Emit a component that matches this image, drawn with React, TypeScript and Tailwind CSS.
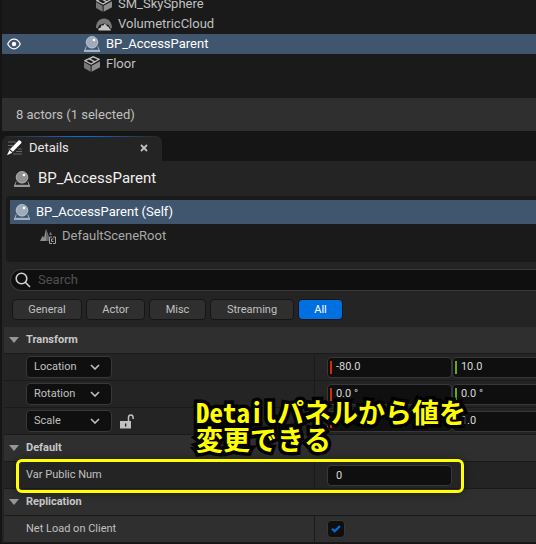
import { useState, type ReactNode } from "react";

function SphereIcon({ tone = "#c0c0c0" }: { tone?: string }) {
  return (
    <svg width="16" height="16" viewBox="0 0 16 16" className="shrink-0" aria-hidden="true">
      <path d="M2.200 10.500 1 14M13.800 10.500 15 14" stroke={tone} strokeWidth="1" opacity=".7" />
      <rect x="0" y="13.800" width="16" height="2.200" fill={tone} opacity=".75" />
      <circle cx="8" cy="6.300" r="5.800" fill={tone} fillOpacity=".7" stroke={tone} strokeWidth=".8" />
      <circle cx="10" cy="4" r="1.300" fill="#fff" />
    </svg>
  );
}

function MeshIcon() {
  return (
    <svg width="16" height="16" viewBox="0 0 16 16" className="shrink-0" aria-hidden="true">
      <path d="M0 6 6.600 9.800v6L0 12z" fill="#777" />
      <path d="M7.600 9.800 16 5.200v6l-8.400 4.600z" fill="#8c8c8c" />
      <path d="M1 4.700 9.200.8l6 2.500-8.100 4.800z" fill="#1a1a1a" stroke="#c0c0c0" strokeWidth="1.300" />
      <path d="m5.200 2.800 5.800 3" stroke="#c0c0c0" strokeWidth="1.300" />
    </svg>
  );
}

function CloudIcon() {
  return (
    <svg width="16" height="16" viewBox="0 0 16 16" className="shrink-0" aria-hidden="true">
      <path d="M0 12C0 6.500 3.200 2.500 8 2.500s8 4 8 9.500l-1.500.5L12.500 9 8 7.500 3.500 9l-2 3.500z" fill="#777" />
      <path d="M2.500 14.500v-2.200l2-.5 1-2.500 1.800.3 1-1.600 1.900.4.700 1.800 1.700.6.600 1.700 1.500.6v1.400z" fill="#c4c4c4" />
    </svg>
  );
}

function EyeIcon() {
  return (
    <svg width="14" height="12" viewBox="0 0 14 12" aria-hidden="true">
      <path d="M.7 6C2.300 2.800 4.400 1.200 7 1.200S11.700 2.800 13.300 6C11.700 9.200 9.600 10.800 7 10.800S2.300 9.200.7 6z" fill="none" stroke="#fff" strokeWidth="1.200" />
      <circle cx="7" cy="6" r="2.200" fill="#fff" />
    </svg>
  );
}

function DetailsIcon() {
  return (
    <svg width="16" height="16" viewBox="0 0 16 16" className="shrink-0" aria-hidden="true">
      <path d="M1 2h8M1 5.500h5M1 9h3M11 9h4M9 11.500h6M6 14h9" stroke="#686868" strokeWidth="1" />
      <path d="m3 9.200 8.500-8.700c1-.8 3.600 1.600 2.900 2.600l-8.500 8.700z" fill="#fff" />
      <path d="m2.400 10 2.900 2.700L0 15.200z" fill="#fff" />
    </svg>
  );
}

function SceneRootIcon() {
  return (
    <svg width="16" height="16" viewBox="0 0 16 16" className="shrink-0" aria-hidden="true">
      <path d="M0 13 2.500 8 4 9.500 6 1l2.500 7v5z" fill="#8d8d8d" />
      <path d="m6 1 2.500 7V13H6z" fill="#666" />
      <path d="m9.500 6 1-2.500L12 7H9.500z" fill="#777" />
      <path d="M13 9h2.500v6.500H13M12 9H9.500v6.500H12M13.500 11h-2v2.500h2" fill="none" stroke="#a5a5a5" strokeWidth="1" />
    </svg>
  );
}

function UnlockIcon() {
  return (
    <svg width="14" height="15" viewBox="0 0 14 15" aria-hidden="true">
      <path d="M0 7h11v7.500H0z" fill="#c0c0c0" />
      <path d="M8.500 7V3.600c0-3.500 4.600-3.500 4.600 0V5" fill="none" stroke="#c0c0c0" strokeWidth="1.500" />
      <path d="M5 9.500h1.300v3H5z" fill="#1a1a1a" />
    </svg>
  );
}

function ActorRow({ icon, label, nested, selected }: { icon: ReactNode; label: string; nested?: boolean; selected?: boolean }) {
  return (
    <div className={`flex h-5 shrink-0 items-center text-[13px] ${selected ? "bg-[#40566f] text-white" : "text-[#c0c0c0]"}`}>
      <div className={`flex shrink-0 pl-[5px] ${nested ? "w-[94px]" : "w-[82px]"}`}>{selected && <EyeIcon />}</div>
      {icon}
      <span className="pl-[6px]">{label}</span>
    </div>
  );
}

function Section({ title, children }: { title: string; children: ReactNode }) {
  return (
    <section>
      <h2 className="h-[27px] border-b border-[#1a1a1a] bg-[#2f2f2f] text-[11px] font-bold text-[#c8c8c8]">
        <button className="flex h-[26px] w-full items-center gap-[7px] pl-[5px]">
          <svg width="10" height="6" viewBox="0 0 10 6" aria-hidden="true">
            <path d="M0 0h10L5 6z" fill="#969696" />
          </svg>
          {title}
        </button>
      </h2>
      {children}
    </section>
  );
}

function PropertyRow({ label, children, lit, marked }: { label: ReactNode; children: ReactNode; lit?: boolean; marked?: boolean }) {
  return (
    <div className={`relative flex h-[27px] border-b border-[#1a1a1a] text-[11px] text-[#c0c0c0] ${lit ? "bg-[#2f2f2f]" : "bg-[#242424]"}`}>
      <div className="flex w-[311px] shrink-0 items-center gap-2 border-r border-[#1a1a1a] pl-[22px]">{label}</div>
      <div className="flex min-w-0 flex-1 items-center pl-3">{children}</div>
      {marked && <div className="pointer-events-none absolute -top-[3px] left-3 h-[34px] w-[448px] rounded-md border-3 border-[#ffff00] shadow-[0_0_8px_rgba(0,0,0,0.4)]" />}
    </div>
  );
}

const fieldClass = "h-[21px] w-[125px] shrink-0 rounded border border-[#383838] bg-[#0f0f0f] text-[11px] text-[#d8d8d8] outline-none";

function AxisInput({ name, value, axis }: { name: string; value: string; axis: "x" | "y" }) {
  return (
    <div className={`${fieldClass} flex items-center gap-1 pl-[2px]`}>
      <span className={`h-[13px] w-[2px] ${axis === "x" ? "bg-[#d42a0b]" : "bg-[#6ca80b]"}`} />
      <input aria-label={name} defaultValue={value} className="h-4 w-full min-w-0 bg-transparent outline-none" />
    </div>
  );
}

function TransformRow({ name, x, y, lock }: { name: string; x: string; y: string; lock?: boolean }) {
  return (
    <PropertyRow
      label={
        <>
          <span className="relative flex">
            <select aria-label={`${name} mode`} className="h-[22px] w-[86px] appearance-none rounded border border-[#383838] bg-[#0f0f0f] pl-[7px] text-[11px] outline-none">
              <option>{name}</option>
            </select>
            <svg width="10" height="6" viewBox="0 0 10 6" className="pointer-events-none absolute top-2 right-3" aria-hidden="true">
              <path d="m1 1 4 4 4-4" fill="none" stroke="#c0c0c0" strokeWidth="1.600" />
            </svg>
          </span>
          {lock && (
            <button aria-label="Lock scale ratio">
              <UnlockIcon />
            </button>
          )}
        </>
      }
    >
      <AxisInput name={`${name} X`} value={x} axis="x" />
      <AxisInput name={`${name} Y`} value={y} axis="y" />
    </PropertyRow>
  );
}

const filters = [
  { name: "General", width: "w-[70px]" },
  { name: "Actor", width: "w-[59px]" },
  { name: "Misc", width: "w-[57px]" },
  { name: "Streaming", width: "w-[84px]" },
  { name: "All", width: "w-[45px]" },
];

export default function App() {
  const [filter, setFilter] = useState("All");
  return (
    <div className="min-h-screen overflow-hidden bg-[#151515] pl-[2px] font-[Roboto,'Noto_Sans_CJK_JP',sans-serif] whitespace-nowrap">
      <div className="flex h-[98px] flex-col justify-end overflow-hidden bg-[#1a1a1a] pb-6">
        <ActorRow icon={<MeshIcon />} label="SM_SkySphere" nested />
        <ActorRow icon={<CloudIcon />} label="VolumetricCloud" nested />
        <ActorRow icon={<SphereIcon tone="#c5d0da" />} label="BP_AccessParent" selected />
        <ActorRow icon={<MeshIcon />} label="Floor" />
      </div>
      <div className="flex h-[33px] items-center bg-[#2f2f2f] pl-[14px] text-[13px] text-[#c0c0c0]">8 actors (1 selected)</div>

      <div className="pt-[5px]">
        <div className="h-[25px] w-40 overflow-hidden rounded-t-md bg-[#242424]">
          <div className="h-px bg-linear-to-r from-[#242424] via-[#0070e0] to-[#242424]" />
          <div className="flex h-[22px] items-center pr-3 pl-[5px] text-[13px] text-[#e8e8e8]">
            <DetailsIcon />
            <span className="flex-1 pl-[6px]">Details</span>
            <button aria-label="Close tab" className="p-[2px]">
              <svg width="8" height="8" viewBox="0 0 8 8" aria-hidden="true">
                <path d="m1 1 6 6M7 1 1 7" stroke="#c0c0c0" strokeWidth="1.800" />
              </svg>
            </button>
          </div>
        </div>
      </div>

      <main className="bg-[#242424]">
        <div className="flex h-[35px] items-center gap-2 pl-3 text-[15px] text-[#f0f0f0]">
          <SphereIcon />
          BP_AccessParent
        </div>
        <div className="ml-1 h-[66px] rounded-l bg-[#1a1a1a] pt-1 pl-1 text-[13px]">
          <div className="flex h-6 items-center gap-[6px] bg-[#40566f] pl-1 text-white">
            <SphereIcon tone="#c5d0da" />
            BP_AccessParent (Self)
          </div>
          <div className="flex h-6 items-center gap-[6px] pl-[30px] text-[#a8a8a8]">
            <SceneRootIcon />
            DefaultSceneRoot
          </div>
        </div>

        <div className="pt-[7px] pl-2">
          <label className="flex h-[22px] items-center gap-[7px] rounded-l-full border border-r-0 border-[#383838] bg-[#0f0f0f] pl-1">
            <svg width="16" height="16" viewBox="0 0 16 16" className="shrink-0" aria-hidden="true">
              <circle cx="6.500" cy="6.500" r="5.300" fill="none" stroke="#d0d0d0" strokeWidth="1.600" />
              <path d="m10.300 10.300 4.700 4.700" stroke="#d0d0d0" strokeWidth="1.600" />
            </svg>
            <input type="text" aria-label="Search details" placeholder="Search" className="h-5 w-full bg-transparent pb-[2px] text-[13px] text-[#c0c0c0] outline-none placeholder:text-[#4f4f4f]" />
          </label>
        </div>
        <div className="flex gap-1 px-[10px] pt-2 pb-[7px]">
          {filters.map(({ name, width }) => (
            <button
              key={name}
              onClick={() => setFilter(name)}
              className={`h-[21px] shrink-0 rounded border border-[#151515] pt-px text-[11px] ${width} ${filter === name ? "bg-[#0070e0] text-white" : "bg-[#2f2f2f] text-[#c0c0c0]"}`}
            >
              {name}
            </button>
          ))}
        </div>

        <div className="pl-[2px]">
          <Section title="Transform">
            <TransformRow name="Location" x="-80.0" y="10.0" />
            <TransformRow name="Rotation" x="0.0 °" y="0.0 °" />
            <div className="relative">
              <TransformRow name="Scale" x="1.0" y="1.0" lock />
              <p className="pointer-events-none absolute -top-[10px] left-[192px] z-10 text-[27px] leading-[27px] font-bold text-[#ffff00] [font-family:'Noto_Sans_Mono_CJK_JP','Noto_Sans_CJK_JP',monospace] [paint-order:stroke_fill] [-webkit-text-stroke:7px_black]">
                Detailパネルから値を
                <br />
                変更できる
              </p>
            </div>
          </Section>
          <Section title="Default">
            <PropertyRow marked label={<label htmlFor="public-num">Var Public Num</label>}>
              <input id="public-num" defaultValue="0" className={`${fieldClass} pl-2`} />
            </PropertyRow>
          </Section>
          <Section title="Replication">
            <PropertyRow lit label={<label htmlFor="net-load">Net Load on Client</label>}>
              <span className="relative flex">
                <input id="net-load" type="checkbox" defaultChecked className="peer size-[18px] appearance-none rounded-sm border border-[#383838] bg-[#0f0f0f]" />
                <svg width="10" height="8" viewBox="0 0 10 8" className="pointer-events-none absolute top-[5px] left-1 hidden peer-checked:block" aria-hidden="true">
                  <path d="m1 3.700 2.700 2.600L9 1" fill="none" stroke="#0070e0" strokeWidth="2.200" />
                </svg>
              </span>
            </PropertyRow>
          </Section>
        </div>
      </main>
    </div>
  );
}
